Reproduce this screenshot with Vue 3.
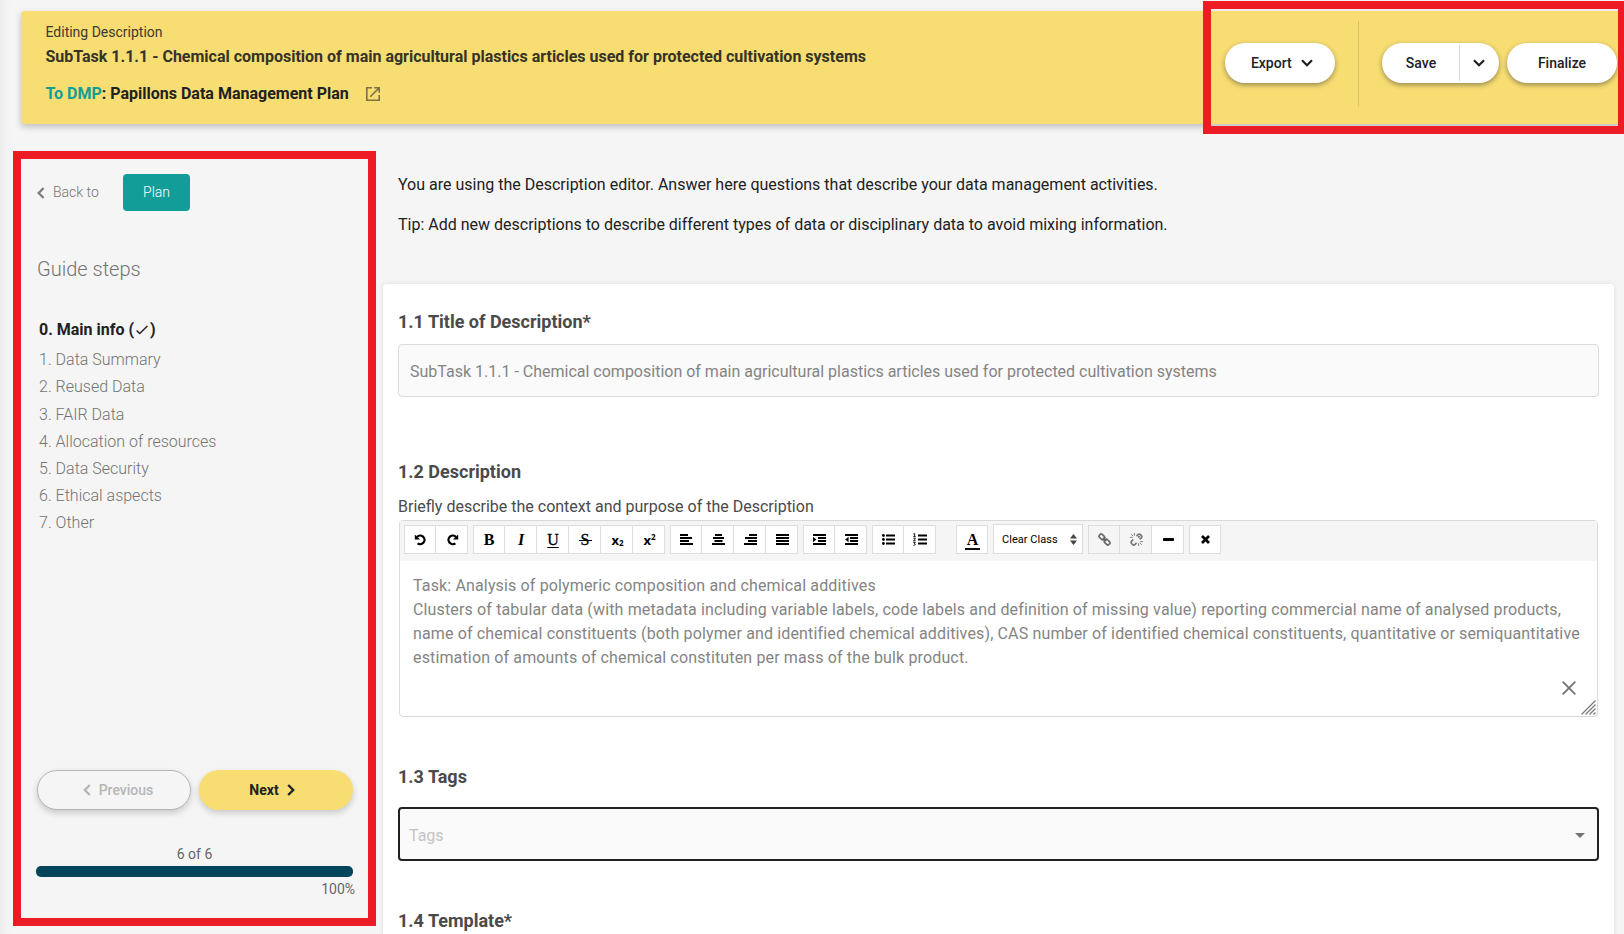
<script setup>
const steps = [
  '1. Data Summary',
  '2. Reused Data',
  '3. FAIR Data',
  '4. Allocation of resources',
  '5. Data Security',
  '6. Ethical aspects',
  '7. Other',
]

const bars = {
  left: [8, 12, 9, 13],
  center: [7, 11, 8, 13],
  right: [8, 12, 9, 13],
  full: [13, 13, 13, 13],
}
function barX(kind, w) {
  if (kind === 'right') return 13 - w
  if (kind === 'center') return (13 - w) / 2
  return 0
}
</script>

<template>
  <div class="page">
    <header class="banner">
      <div class="titles">
        <div class="editing">Editing Description</div>
        <div class="name">SubTask 1.1.1 - Chemical composition of main agricultural plastics articles used for protected cultivation systems</div>
        <div class="dmp">
          <span><span class="teal">To DMP</span>: Papillons Data Management Plan</span>
          <svg width="14" height="14" viewBox="0 0 14 14" fill="none" stroke="#7b7147" stroke-width="1.6">
            <path d="M6 .8H.8v12.4h12.4V8M8.2.8h5v5M13.2.8L4.3 9.7" />
          </svg>
        </div>
      </div>
      <div class="actions">
        <button class="pill export">
          <span>Export</span>
          <svg width="12" height="8" viewBox="0 0 12 8"><path d="M1 1.3l5 5 5-5" fill="none" stroke="#212121" stroke-width="2.2" /></svg>
        </button>
        <div class="rule"></div>
        <button class="pill save">
          <span class="save-label">Save</span>
          <span class="save-more">
            <svg width="12" height="8" viewBox="0 0 12 8"><path d="M1 1.3l5 5 5-5" fill="none" stroke="#212121" stroke-width="2.2" /></svg>
          </span>
        </button>
        <button class="pill finalize">Finalize</button>
      </div>
    </header>

    <div class="body">
      <aside class="side">
        <div class="back">
          <svg width="8" height="12" viewBox="0 0 8 12"><path d="M6.6 1L1.7 6l4.9 5" fill="none" stroke="#7d7d7d" stroke-width="2.3" /></svg>
          <span class="back-label">Back to</span>
          <button class="plan">Plan</button>
        </div>
        <h2 class="guide">Guide steps</h2>
        <ul class="steps">
          <li class="active">
            <span>0. Main info (</span>
            <svg width="12" height="10" viewBox="0 0 12 10"><path d="M.6 5.6l3.1 3L11.4.9" fill="none" stroke="#212121" stroke-width="1.4" /></svg>
            <span>)</span>
          </li>
          <li v-for="s in steps" :key="s">{{ s }}</li>
        </ul>
        <div class="nav">
          <button class="prev">
            <svg width="8" height="12" viewBox="0 0 8 12"><path d="M6.8 1l-5 5 5 5" fill="none" stroke="#b5b5b5" stroke-width="2.3" /></svg>
            <span>Previous</span>
          </button>
          <button class="next">
            <span>Next</span>
            <svg width="8" height="12" viewBox="0 0 8 12"><path d="M1.2 1l5 5-5 5" fill="none" stroke="#212121" stroke-width="2.4" /></svg>
          </button>
        </div>
        <div class="count">6 of 6</div>
        <div class="progress"></div>
        <div class="percent">100%</div>
      </aside>

      <main class="main">
        <div class="intro">
          <p>You are using the Description editor. Answer here questions that describe your data management activities.</p>
          <p>Tip: Add new descriptions to describe different types of data or disciplinary data to avoid mixing information.</p>
        </div>
        <section class="card">
          <h3 class="h-title">1.1 Title of Description*</h3>
          <div class="field">SubTask 1.1.1 - Chemical composition of main agricultural plastics articles used for protected cultivation systems</div>

          <h3 class="h-desc">1.2 Description</h3>
          <div class="hint">Briefly describe the context and purpose of the Description</div>
          <div class="editor">
            <div class="toolbar">
              <div class="group">
                <i><svg width="13" height="12" viewBox="0 0 13 12"><path d="M3 3A4.3 4.3 0 1 1 3.6 9.3" fill="none" stroke="#000" stroke-width="2.3" /><path d="M.8.4v5.200h5.200z" /></svg></i>
                <i><svg width="13" height="12" viewBox="0 0 13 12"><path d="M10 3A4.300 4.300 0 1 0 9.400 9.300" fill="none" stroke="#000" stroke-width="2.300" /><path d="M12.200.4v5.200H7z" /></svg></i>
              </div>
              <div class="group">
                <i class="serif">B</i>
                <i class="serif italic">I</i>
                <i class="serif under">U</i>
                <i class="serif strike">S</i>
                <i class="script-x">x<sub>2</sub></i>
                <i class="script-x">x<sup>2</sup></i>
              </div>
              <div class="group">
                <i v-for="(ws, kind) in bars" :key="kind">
                  <svg width="13" height="11" viewBox="0 0 13 11">
                    <rect v-for="(w, n) in ws" :key="n" :x="barX(kind, w)" :y="n * 3" :width="w" height="2" />
                  </svg>
                </i>
              </div>
              <div class="group">
                <i><svg width="13" height="11" viewBox="0 0 13 11"><path d="M0 0h13v2H0zM5 3h8v2H5zM5 6h8v2H5zM0 9h13v2H0zM0 2.800l3.400 2.700L0 8.200z" /></svg></i>
                <i><svg width="13" height="11" viewBox="0 0 13 11"><path d="M0 0h13v2H0zM5 3h8v2H5zM5 6h8v2H5zM0 9h13v2H0zM3.600 2.800L.2 5.500l3.400 2.700z" /></svg></i>
              </div>
              <div class="group">
                <i><svg width="13" height="11" viewBox="0 0 13 11"><path d="M4 .5h9v2H4zM4 4.500h9v2H4zM4 8.500h9v2H4z" /><circle cx="1.400" cy="1.500" r="1.400" /><circle cx="1.400" cy="5.500" r="1.400" /><circle cx="1.400" cy="9.500" r="1.400" /></svg></i>
                <i><svg width="14" height="13" viewBox="0 0 14 13"><path d="M5 1.500h9v2H5zM5 5.500h9v2H5zM5 9.500h9v2H5z" /><path d="M.4 1l1.200-.5v3M.3 3.600h2.400M.4 5.200h1.800v1L.5 7.800h2.200M.3 9.500h2L1.400 10.700q1 0 1 .8t-2 .8" fill="none" stroke="#000" stroke-width=".9" /></svg></i>
              </div>
              <div class="group color"><i class="serif letter">A</i></div>
              <div class="select">
                <span>Clear Class</span>
                <svg width="7" height="11" viewBox="0 0 7 11" fill="#444"><path d="M3.500 0L7 4.600H0zM3.500 11L0 6.400h7z" /></svg>
              </div>
              <div class="group links">
                <i class="off"><svg width="13" height="13" viewBox="0 0 13 13" fill="none" stroke="#666" stroke-width="1.600"><rect x="-3" y="-2" width="6" height="4" rx="1.700" transform="translate(3.900 3.900) rotate(45)" /><rect x="-3" y="-2" width="6" height="4" rx="1.700" transform="translate(9.100 9.100) rotate(45)" /><path d="M4.700 4.700l3.600 3.600" /></svg></i>
                <i class="off"><svg width="13" height="13" viewBox="0 0 13 13" fill="none" stroke="#777" stroke-width="1.700"><path d="M8.200 4.700l1.500-1.600M6.400 3.200L8 1.500q1.200-1 2.500.2l.8.9q1 1.200 0 2.300L9.600 6.500M6.600 9.800L5 11.500q-1.200 1-2.400 0l-1-1q-1.100-1.200 0-2.400L3.300 6.500" /><path d="M4.400 0v2.700M1.200 1.200l2 2M0 4.400h2.700M8.600 10.300V13M9.800 9.800l2 2M10.300 8.600H13" stroke-width=".9" /></svg></i>
                <i><svg width="11" height="3" viewBox="0 0 11 3"><rect width="11" height="3" rx=".8" /></svg></i>
              </div>
              <div class="group">
                <i><svg width="9" height="9" viewBox="0 0 9 9"><path d="M1 1l7 7M8 1L1 8" stroke="#000" stroke-width="2.700" /></svg></i>
              </div>
            </div>
            <div class="text">
              Task: Analysis of polymeric composition and chemical additives<br />
              Clusters of tabular data (with metadata including variable labels, code labels and definition of missing value) reporting commercial name of analysed products,<br />
              name of chemical constituents (both polymer and identified chemical additives), CAS number of identified chemical constituents, quantitative or semiquantitative<br />
              estimation of amounts of chemical constituten per mass of the bulk product.
            </div>
            <svg class="clear" width="14" height="14" viewBox="0 0 14 14"><path d="M.7.7l12.600 12.600M13.300.7L.7 13.300" stroke="#757575" stroke-width="1.900" /></svg>
            <svg class="grip" width="15" height="15" viewBox="0 0 15 15"><path d="M.5 14.500l14-14M4.500 14.500l10-10M8.500 14.500l6-6M12.500 14.500l2-2" stroke="#777" stroke-width="1.200" /></svg>
          </div>

          <h3 class="h-tags">1.3 Tags</h3>
          <div class="tags">
            <span>Tags</span>
            <svg width="10" height="5" viewBox="0 0 10 5"><path d="M0 0h10L5 5z" fill="#757575" /></svg>
          </div>
          <h3 class="h-template">1.4 Template*</h3>
        </section>
      </main>
    </div>

    <div class="mark mark-side"></div>
    <div class="mark mark-actions"></div>
  </div>
</template>

<style>
body {
  background: #f5f5f5;
  overflow: hidden;
}
</style>

<style scoped>
.page,
.page * {
  box-sizing: border-box;
}
.page {
  position: relative;
  width: 1624px;
  height: 934px;
  overflow: hidden;
  padding-top: 11px;
  background: linear-gradient(90deg, #ededed, #f5f5f5 10px);
  color: #212121;
  font: 400 16px/24px Roboto, sans-serif;
}
button {
  border: 0;
  padding: 0;
  font-family: inherit;
  color: inherit;
}
svg {
  display: block;
  flex: none;
}
h2,
h3,
p,
ul {
  margin: 0;
  padding: 0;
}

.banner {
  display: flex;
  justify-content: space-between;
  height: 113px;
  margin-left: 20.5px;
  background: #f7dd72;
  border-radius: 4px 0 0 4px;
  box-shadow: 0 3px 6px #1e202040;
}
.titles {
  padding: 9px 0 0 25px;
  white-space: nowrap;
}
.editing {
  height: 25px;
  font-size: 14px;
  color: #3c3a2e;
}
.name {
  font-weight: 700;
  color: #353326;
}
.dmp {
  display: flex;
  align-items: center;
  gap: 17px;
  margin-top: 13px;
  font-weight: 700;
}
.teal {
  color: #129d99;
}
.actions {
  display: flex;
  align-items: center;
  padding: 0 7px 9px 0;
}
.pill {
  display: flex;
  align-items: center;
  justify-content: center;
  height: 40px;
  background: #fff;
  border-radius: 20px;
  box-shadow: 0 2px 5px #1e202070;
  font-size: 14px;
  font-weight: 500;
}
.export {
  width: 110px;
  gap: 9.5px;
  padding-left: 4px;
}
.rule {
  width: 1px;
  height: 85px;
  margin: 0 23px;
  background: #d6c36f;
}
.save {
  width: 117px;
  margin-right: 8px;
}
.save-label {
  width: 78px;
  height: 36px;
  padding-left: 1px;
  line-height: 36px;
  border-right: 1px solid #d9d9d9;
}
.save-more {
  display: flex;
  flex: 1;
  justify-content: center;
  padding-right: 1px;
}
.finalize {
  width: 110px;
}

.body {
  display: flex;
  padding: 35px 10px 0 36px;
}
.side {
  width: 319px;
  margin-right: 28px;
  font-weight: 300;
}
.back {
  display: flex;
  align-items: center;
  height: 37px;
  margin-top: 15px;
  padding-left: 1px;
  font-size: 14px;
  color: #757575;
}
.back-label {
  width: 70px;
  margin: -1px 0 0 8px;
}
.plan {
  width: 67px;
  height: 37px;
  padding-bottom: 1px;
  border-radius: 4px;
  background: #129d99;
  color: #fff;
  font-size: 14px;
  font-weight: 300;
}
.guide {
  margin: 46px 0 0 1px;
  font-size: 20px;
  line-height: 24px;
  font-weight: 300;
  color: #737373;
}
.steps {
  margin: 32px 0 0 3px;
  list-style: none;
  height: 457px;
}
.steps li {
  height: 27.15px;
  line-height: 27px;
  color: #737373;
}
.steps .active {
  display: flex;
  align-items: center;
  height: 32px;
  margin-bottom: 1.25px;
  color: #212121;
  font-weight: 700;
}
.active svg {
  margin: 2px 2px 0;
}
.nav {
  display: flex;
  gap: 8px;
  margin-left: 1px;
}
.nav button {
  display: flex;
  align-items: center;
  justify-content: center;
  gap: 8px;
  width: 154px;
  height: 40px;
  border-radius: 20px;
  font-size: 14px;
  box-shadow: 0 3px 6px #1e202033;
}
.nav .prev {
  padding-left: 8px;
  border: 1px solid #b5b5b5;
  background: #f5f5f5;
  color: #b5b5b5;
  font-weight: 500;
}
.nav .next {
  padding-right: 8px;
  background: #f7dd72;
  font-weight: 700;
}
.count {
  margin-top: 32px;
  width: 317px;
  text-align: center;
  font-size: 14px;
  font-weight: 400;
  color: #666;
}
.progress {
  width: 317px;
  height: 11px;
  border-radius: 5px;
  background: #04455b;
}
.percent {
  text-align: right;
  font-size: 14px;
  font-weight: 400;
  color: #666;
}

.main {
  flex: 1;
}
.intro {
  height: 125px;
  padding: 14px 15px 0;
}
.intro p {
  margin-bottom: 16px;
}
.card {
  height: 700px;
  padding: 26px 15px 0;
  background: #fff;
  border-radius: 4px;
  box-shadow: 0 0 5px #0000001c;
}
h3 {
  font-size: 18px;
  line-height: 24px;
  font-weight: 700;
  color: #4a4a4a;
}
.field {
  height: 53px;
  margin-top: 10px;
  padding-left: 11px;
  line-height: 53px;
  border: 1px solid #dcdcdc;
  border-radius: 4px;
  background: #fafafa;
  color: #848484;
}
.h-desc {
  margin-top: 63px;
}
.hint {
  height: 24px;
  margin-top: 11px;
  line-height: 24px;
  color: #4a4a4a;
}
.editor {
  position: relative;
  height: 197px;
  margin: 1px 1px 0;
  border: 1px solid #dadada;
  border-radius: 4px;
}
.toolbar {
  display: flex;
  gap: 5px;
  height: 40px;
  padding: 4px 0 0 4px;
  background: #f5f5f5;
}
.group {
  display: flex;
  height: 29px;
}
.group i {
  position: relative;
  display: flex;
  align-items: center;
  justify-content: center;
  width: 32px;
  height: 29px;
  border: 1px solid #ddd;
  background: #fff;
  color: #000;
  font-style: normal;
}
.group i + i {
  border-left-width: 0;
  padding-left: 1px;
}
.group .serif {
  font: 700 16px "Liberation Serif", serif;
}
.group .italic {
  font-style: italic;
}
.group .under {
  text-decoration: underline;
  text-underline-offset: 2px;
  -webkit-text-stroke: 0.3px #000;
  font-weight: 400;
}
.group .strike {
  text-decoration: line-through;
  text-decoration-thickness: 1px;
  -webkit-text-stroke: 0.3px #000;
  font-weight: 400;
}
.strike::after {
  content: "";
  position: absolute;
  left: 10px;
  top: 14px;
  width: 13px;
  height: 1px;
  background: #000;
}
.group .script-x {
  font: 700 13px "Open Sans", sans-serif;
  padding-left: 2px;
}
.script-x sub,
.script-x sup {
  font-size: 8px;
  line-height: 8px;
}
.script-x sub {
  padding-top: 7px;
}
.script-x sup {
  padding-bottom: 6px;
}
.color {
  margin-left: 15px;
}
.group .letter {
  padding-left: 1px;
}
.group .letter::after {
  content: "";
  position: absolute;
  left: 8px;
  bottom: 3px;
  width: 15px;
  height: 2px;
  background: #111;
}
.select {
  display: flex;
  align-items: center;
  justify-content: space-between;
  width: 90px;
  height: 30px;
  margin-top: -1px;
  padding: 1px 5px 0 8px;
  border: 1px solid #ddd;
  background: #fff;
  color: #000;
  font-size: 11px;
  letter-spacing: 0.03px;
}
.group .off {
  background: #f5f5f5;
}
.text {
  padding: 13px 0 0 13px;
  white-space: nowrap;
  letter-spacing: 0.144px;
  color: #848484;
}
.clear {
  position: absolute;
  right: 21px;
  bottom: 21px;
}
.grip {
  position: absolute;
  right: 1px;
  bottom: 1px;
}
.h-tags {
  margin-top: 48px;
}
.tags {
  display: flex;
  align-items: center;
  justify-content: space-between;
  height: 54px;
  margin-top: 18px;
  padding: 3px 12px 0 9px;
  border: 2px solid #212121;
  border-radius: 4px;
  background: #fafafa;
  color: #c4c4c4;
}
.h-template {
  margin-top: 48px;
}

.mark {
  position: absolute;
  border: 8px solid #ed1c24;
}
.mark-side {
  left: 13px;
  top: 151px;
  width: 363px;
  height: 775px;
}
.mark-actions {
  left: 1203px;
  top: 1px;
  width: 423px;
  height: 133px;
}
</style>
